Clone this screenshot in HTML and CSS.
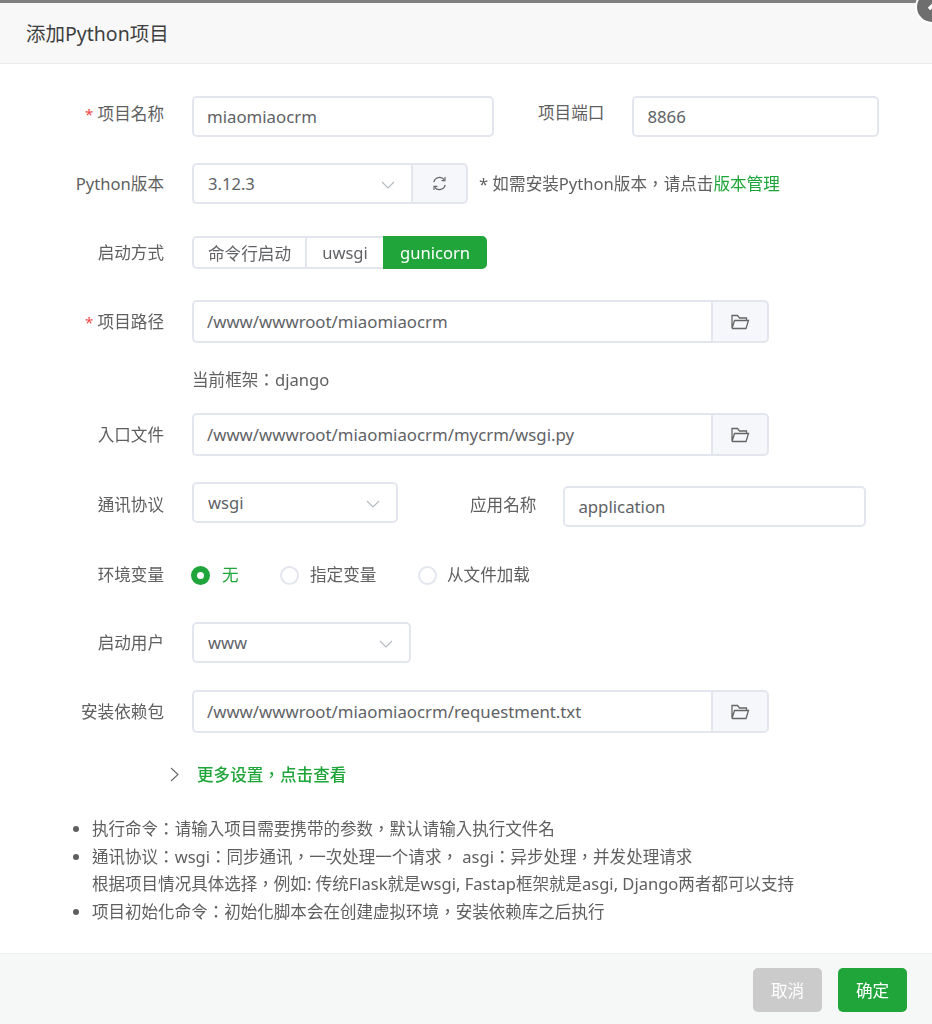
FILE: index.html
```html
<!DOCTYPE html>
<html lang="zh-TW">
<head>
<meta charset="utf-8">
<title>添加Python项目</title>
<link rel="stylesheet" href="styles.css">
</head>
<body>
<div class="dialog">
  <header class="head">添加Python项目</header>
  <main class="body">
    <div class="row mb26">
      <label class="label"><span class="req">*</span> 项目名称</label>
      <div class="input w302">miaomiaocrm</div>
      <label class="label side l44">项目端口</label>
      <div class="input w247 ml28">8866</div>
    </div>
    <div class="row mb32 low">
      <label class="label">Python版本</label>
      <div class="group">
        <div class="select w219 joined">3.12.3<svg class="chev" viewBox="0 0 14 8" width="14" height="8"><path d="M1 1 L7 7 L13 1" fill="none" stroke="#b4b8bf" stroke-width="1.1"/></svg></div>
        <div class="addon w57"><svg viewBox="0 0 18 18" width="17" height="17"><path d="M3 7.5 A6.2 6.2 0 0 1 14 5 M15 10.5 A6.2 6.2 0 0 1 4 13" fill="none" stroke="#666" stroke-width="1.4"/><path d="M14.8 2.2 V5.9 H11.2 M3.2 15.8 V12.1 H6.8" fill="none" stroke="#666" stroke-width="1.2"/></svg></div>
      </div>
      <p class="note">* 如需安装Python版本，请点击<a class="link">版本管理</a></p>
    </div>
    <div class="row mb31 short">
      <label class="label">启动方式</label>
      <div class="segs">
        <span class="seg s1">命令行启动</span><span class="seg s2">uwsgi</span><span class="seg on">gunicorn</span>
      </div>
    </div>
    <div class="row mb18 tall">
      <label class="label"><span class="req">*</span> 项目路径</label>
      <div class="group">
        <div class="input w519 joined">/www/wwwroot/miaomiaocrm</div>
        <div class="addon w58"><svg viewBox="0 0 20 18" width="20" height="18"><path d="M2 15.5 V2.5 H7.5 L9.5 5 H16.5 V7.5 M2 15.5 H16 L18.5 7.5 H4.5 L2 15.5" fill="none" stroke="#666" stroke-width="1.3"/></svg></div>
      </div>
    </div>
    <div class="row mb21 framework">
      <span class="label"></span>
      <span class="plain">当前框架：django</span>
    </div>
    <div class="row mb26 tall">
      <label class="label">入口文件</label>
      <div class="group">
        <div class="input w519 joined">/www/wwwroot/miaomiaocrm/mycrm/wsgi.py</div>
        <div class="addon w58"><svg viewBox="0 0 20 18" width="20" height="18"><path d="M2 15.5 V2.5 H7.5 L9.5 5 H16.5 V7.5 M2 15.5 H16 L18.5 7.5 H4.5 L2 15.5" fill="none" stroke="#666" stroke-width="1.3"/></svg></div>
      </div>
    </div>
    <div class="row mb38 proto">
      <label class="label">通讯协议</label>
      <div class="select w206">wsgi<svg class="chev" viewBox="0 0 14 8" width="14" height="8"><path d="M1 1 L7 7 L13 1" fill="none" stroke="#b4b8bf" stroke-width="1.1"/></svg></div>
      <label class="label side l72">应用名称</label>
      <div class="input w303 ml27 down4">application</div>
    </div>
    <div class="row mb35 radios">
      <label class="label">环境变量</label>
      <div class="radio-list">
        <span class="radio first"><i class="dot on"></i><em class="radio-on">无</em></span>
        <span class="radio second"><i class="dot"></i>指定变量</span>
        <span class="radio third"><i class="dot"></i>从文件加载</span>
      </div>
    </div>
    <div class="row mb27 low">
      <label class="label">启动用户</label>
      <div class="select w219">www<svg class="chev" viewBox="0 0 14 8" width="14" height="8"><path d="M1 1 L7 7 L13 1" fill="none" stroke="#b4b8bf" stroke-width="1.1"/></svg></div>
    </div>
    <div class="row mb30 tall">
      <label class="label">安装依赖包</label>
      <div class="group">
        <div class="input w519 joined">/www/wwwroot/miaomiaocrm/requestment.txt</div>
        <div class="addon w58"><svg viewBox="0 0 20 18" width="20" height="18"><path d="M2 15.5 V2.5 H7.5 L9.5 5 H16.5 V7.5 M2 15.5 H16 L18.5 7.5 H4.5 L2 15.5" fill="none" stroke="#666" stroke-width="1.3"/></svg></div>
      </div>
    </div>
    <div class="more">
      <svg viewBox="0 0 9 15" width="9" height="15"><path d="M1 1 L8 7.5 L1 14" fill="none" stroke="#666" stroke-width="1.1"/></svg>
      <a class="link strong">更多设置，点击查看</a>
    </div>
    <ul class="tips">
      <li>执行命令：请输入项目需要携带的参数，默认请输入执行文件名</li>
      <li>通讯协议：wsgi：同步通讯，一次处理一个请求， asgi：异步处理，并发处理请求<br>根据项目情况具体选择，例如: 传统Flask就是wsgi, Fastap框架就是asgi, Django两者都可以支持</li>
      <li>项目初始化命令：初始化脚本会在创建虚拟环境，安装依赖库之后执行</li>
    </ul>
  </main>
  <footer class="foot">
    <button class="btn gray">取消</button>
    <button class="btn green">确定</button>
  </footer>
  <span class="close"><svg viewBox="-4 5 30 30" width="30" height="30"><path d="M8 22 L22 8 M8 8 L22 22" stroke="#fff" stroke-width="3.4" fill="none"/></svg></span>
</div>
</body>
</html>
```
FILE: styles.css
```css
* { box-sizing: border-box; }
html, body { margin: 0; padding: 0; }
body {
  width: 932px;
  height: 1024px;
  overflow: hidden;
  background: #7f7f7f;
  font-family: "Noto Sans", "Noto Sans CJK TC", sans-serif;
  font-size: 16.6px;
  color: #5a5a5a;
}
.dialog {
  position: relative;
  margin-top: 3px;
  height: 1021px;
  background: #fff;
  border-radius: 3px 3px 0 0;
  display: flex;
  flex-direction: column;
  filter: blur(0.35px);
}
.close {
  position: absolute;
  left: 915px;
  top: -13px;
  width: 34px;
  height: 34px;
  border: 2px solid #fff;
  border-radius: 50%;
  background: #6e6e6e;
}
.close svg { display: block; }
.head {
  height: 61px;
  flex: none;
  padding: 14px 0 0 26px;
  background: #f8f8f8;
  border-bottom: 1px solid #e9e9e9;
  font-size: 19.5px;
  line-height: 33px;
  color: #3f3f3f;
}
.body { flex: 1; padding-top: 32px; }
.row { display: flex; align-items: flex-start; height: 41px; }
.row.short { height: 33px; }
.row.tall { height: 43px; }
.row.framework { height: 25px; }
.row.proto { height: 45px; }
.row.radios { height: 22px; }
.mb18 { margin-bottom: 25px; }
.mb21 { margin-bottom: 20px; }
.mb26 { margin-bottom: 26px; }
.mb27 { margin-bottom: 27px; }
.mb30 { margin-bottom: 30px; }
.mb31 { margin-bottom: 31px; }
.mb32 { margin-bottom: 32px; }
.mb35 { margin-bottom: 36px; }
.mb38 { margin-bottom: 37px; }
.label {
  flex: none;
  width: 164px;
  margin-right: 28px;
  text-align: right;
  line-height: 36px;
  color: #5f5f5f;
}
.row.low .label { line-height: 42px; }
.row.tall .label { line-height: 44px; }
.row.proto .label { line-height: 45px; }
.row.short .label { line-height: 34px; }
.row.framework .label { height: 1px; }
.row.radios .label { line-height: 22px; }
.label.side { width: auto; margin-right: 0; line-height: 34px; }
.l44 { margin-left: 44px; }
.row.proto .label.l72 { margin-left: 72px; margin-right: 0; line-height: 45px; }
.ml27 { margin-left: 27px; }
.ml28 { margin-left: 28px; }
.down4 { margin-top: 4px; }
.req { color: #ef4444; font-size: 15px; }
.input, .select {
  flex: none;
  height: 41px;
  border: 2px solid #e4e6ef;
  border-radius: 5px;
  padding-left: 13px;
  line-height: 37px;
  font-size: 16.8px;
  color: #606266;
  background: #fff;
  position: relative;
}
.select { padding-left: 14px; font-size: 16.6px; }
.row.tall .input { height: 43px; line-height: 39px; }
.w206 { width: 206px; }
.w219 { width: 219px; }
.w247 { width: 247px; }
.w302 { width: 302px; }
.w303 { width: 303px; }
.w519 { width: 519px; }
.w57 { width: 57px; }
.w58 { width: 58px; }
.joined { border-radius: 5px 0 0 5px; border-right: 0; }
.chev { position: absolute; right: 16px; top: 16px; }
.group { display: flex; }
.addon {
  flex: none;
  display: flex;
  align-items: center;
  justify-content: center;
  border: 2px solid #e4e6ef;
  border-radius: 0 5px 5px 0;
  background: #f5f7fa;
}
.note { margin: 0 0 0 11px; line-height: 41px; color: #5f5f5f; }
.link { color: #20a53a; }
.strong { font-weight: 500; }
.segs { display: flex; height: 33px; }
.seg {
  display: flex;
  align-items: center;
  justify-content: center;
  height: 33px;
  border: 2px solid #e4e6ef;
  color: #606266;
}
.s1 { width: 115px; border-radius: 5px 0 0 5px; }
.s2 { width: 76px; border-left: 0; border-right: 0; }
.seg.on {
  width: 104px;
  background: #20a53a;
  border-color: #20a53a;
  color: #fff;
  border-radius: 0 5px 5px 0;
}
.plain { line-height: 23px; color: #5f5f5f; }
.radio-list { display: flex; margin-left: -1px; }
.radio { display: flex; align-items: center; line-height: 22px; color: #5f5f5f; }
.radio em { font-style: normal; }
.radio-on { color: #20a53a; }
.first { width: 89px; }
.second { width: 138px; }
.dot {
  width: 19px;
  height: 19px;
  margin-right: 11px;
  border: 2px solid #e4e6ef;
  border-radius: 50%;
  background: #fff;
}
.dot.on { border: 6px solid #20a53a; margin-right: 12px; }
.third .dot { margin-right: 10px; }
.more {
  display: flex;
  align-items: center;
  height: 22px;
  padding-left: 170px;
  gap: 18px;
  margin-bottom: 30px;
}
.tips {
  margin: 0;
  padding: 0 0 0 92px;
  font-size: 16.55px;
  line-height: 27.5px;
  color: #5f5f5f;
}
.foot {
  flex: none;
  height: 71px;
  display: flex;
  justify-content: flex-end;
  gap: 16px;
  padding: 14px 25px 0 0;
  background: #f6f8f8;
  border-top: 1px solid #eeeeee;
}
.btn {
  width: 69px;
  height: 44px;
  border: 0;
  border-radius: 5px;
  font: inherit;
  color: #fff;
}
.gray { background: #cbcbcb; }
.green { background: #20a53a; }
```
